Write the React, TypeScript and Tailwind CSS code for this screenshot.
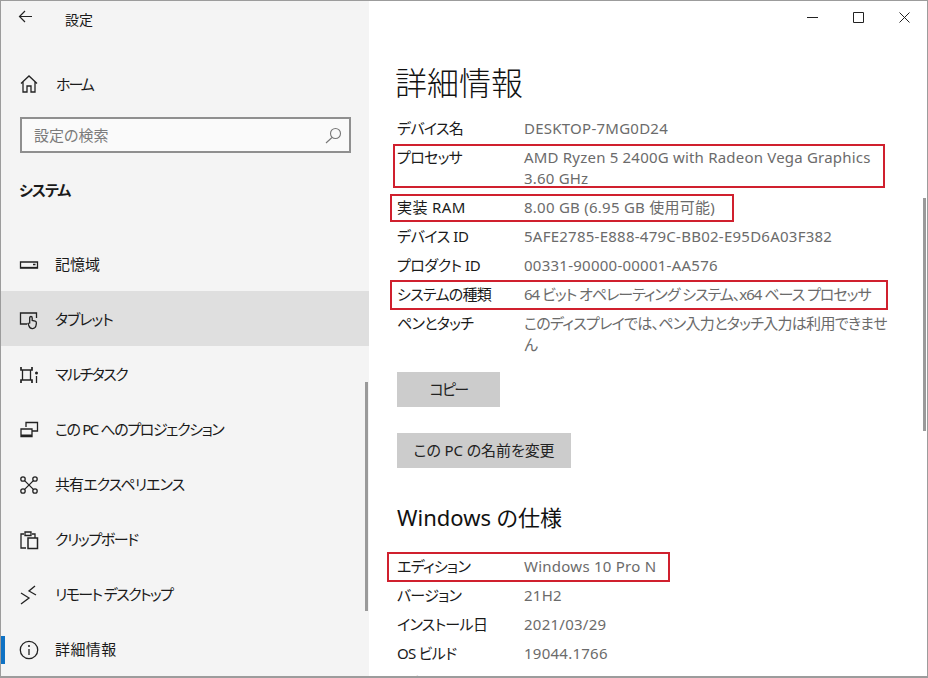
const F = "font-['Noto_Sans','Noto_Sans_CJK_JP',sans-serif] [font-feature-settings:'palt']";

const S = { width: 22, height: 22, viewBox: "0 0 22 22", fill: "none", stroke: "#222", strokeWidth: 1.3 } as const;

const icons: Record<string, React.ReactNode> = {
  home: <svg {...S}><path d="M3 10.5 11 3l8 7.5M5 9v10h4v-6h4v6h4V9" /></svg>,
  storage: <svg {...S}><path d="M2.5 8h17v6h-17zM15 10.5h2.5" /><path d="M2.5 13.5h17" /></svg>,
  tablet: (
    <svg {...S}>
      <path d="M9 15H2.5V4h16v5" />
      <path d="M13 7.5c1 0 1.2.7 1.2 1.5v2.5l3 .7c1 .3 1.3 1 1.2 2l-.4 2.3a3.6 3.6 0 0 1-7 .5l-1-2.5 1.7-.5V9c0-.8.3-1.5 1.3-1.5z" fill="#dfdfdf" />
    </svg>
  ),
  multi: (
    <svg {...S}>
      <path d="M3 3v3h11V3M3 19v-3h11v3" strokeWidth="1.7" />
      <path d="M4.5 6v10M12.5 6v10" />
      <circle cx="18.5" cy="9" r="1.5" fill="#222" stroke="none" />
      <path d="M18.5 12v7" />
    </svg>
  ),
  project: (
    <svg {...S}>
      <path d="M8 8V3.5h11.5V12H14" />
      <path d="M3 10h11v7.5H3z" />
      <path d="M3 16.5h11" strokeWidth="2" />
    </svg>
  ),
  share: (
    <svg {...S}>
      <circle cx="5" cy="5" r="2.2" />
      <circle cx="17" cy="5" r="2.2" />
      <circle cx="5" cy="17" r="2.2" />
      <circle cx="17" cy="17" r="2.2" />
      <path d="m6.6 6.6 8.8 8.8M15.4 6.6l-8.8 8.8" />
    </svg>
  ),
  clip: (
    <svg {...S}>
      <path d="M8 19H3V5h3M14 5h3v4" />
      <path d="M7 3h6v3.5H7z" />
      <path d="M10 9h9.5v10.5H10z" strokeWidth="1.5" />
    </svg>
  ),
  remote: (
    <svg {...S}>
      <path d="m3 9 8 5-8 6M17 2l-6 5 7 4" />
    </svg>
  ),
  info: (
    <svg {...S}>
      <circle cx="11" cy="11" r="8.7" />
      <path d="M11 10v6" />
      <circle cx="11" cy="7" r="1" fill="#222" stroke="none" />
    </svg>
  ),
};

const nav = [
  ["storage", "記憶域", "tracking-[0px]"],
  ["tablet", "タブレット", "tracking-[-1px]"],
  ["multi", "マルチタスク", "tracking-[-1.5px]"],
  ["project", "この PC へのプロジェクション", "tracking-[-1.4px]"],
  ["share", "共有エクスペリエンス", "tracking-[-0.9px]"],
  ["clip", "クリップボード", "tracking-[-1.4px]"],
  ["remote", "リモート デスクトップ", "tracking-[-1.6px]"],
  ["info", "詳細情報", "tracking-[0.4px]"],
];

function Row({ label, value, lt = "tracking-[-0.7px]", vt = "tracking-[0.25px]" }: { label: string; value: React.ReactNode; lt?: string; vt?: string }) {
  return (
    <div className="flex pb-2 text-[15px] leading-[21px]">
      <div className={`w-[127px] shrink-0 whitespace-nowrap text-[#1a1a1a] ${lt}`}>{label}</div>
      <div className={`w-[366px] text-[#6b6b6b] ${vt}`}>{value}</div>
    </div>
  );
}

function Mark({ c }: { c: string }) {
  return <div className={`absolute border-2 border-[#d0202e] ${c}`} />;
}

export default function App() {
  return (
    <div className={`relative flex h-[678px] w-[928px] overflow-hidden border border-b-2 border-[#9c9c9c] bg-white ${F}`}>
      <aside className="relative flex w-[368px] shrink-0 flex-col bg-[#f4f4f4] text-[#1a1a1a]">
        <div className="flex h-[39px] items-center pl-[17px] text-[14px]">
          <svg width="15" height="15" viewBox="0 0 15 15" fill="none" stroke="#222" strokeWidth="1.2" className="mb-[7px]">
            <path d="M14 7.5H1.5M7 2 1.5 7.5 7 13" />
          </svg>
          <span className="ml-[32px]">設定</span>
        </div>
        <div className="mt-[19px] flex h-[55px] items-center pl-[17px] text-[15px]">
          {icons.home}
          <span className="ml-[16px] tracking-[-2px]">ホーム</span>
        </div>
        <div className="ml-[19px] mt-[7px] flex h-[37px] w-[331px] items-center justify-between border-[2px] border-[#8f8f8f] bg-[#fafafa] pl-[12px] pr-[7px] text-[15px] text-[#7b7b7b]">
          <span>設定の検索</span>
          <svg width="17" height="17" viewBox="0 0 17 17" fill="none" stroke="#777" strokeWidth="1.1">
            <circle cx="10.5" cy="6.5" r="5" />
            <path d="M7 10.5 1 16" />
          </svg>
        </div>
        <div className="ml-[18px] mt-[26px] text-[15px] font-bold leading-[22px] tracking-[-1px]">システム</div>
        <nav className="mt-[35px] flex flex-col">
          {nav.map(([k, t, tr]) => (
            <div key={k} className={`relative flex h-[55px] items-center pl-[17px] pt-[2px] text-[15px] ${k === "tablet" ? "bg-[#dfdfdf]" : ""}`}>
              {k === "info" && <div className="absolute left-0 top-[15px] h-[28px] w-[4px] bg-[#0f72c4]" />}
              <span className="flex w-[22px] justify-center">{icons[k]}</span>
              <span className={`ml-[15px] whitespace-nowrap ${tr}`}>{t}</span>
            </div>
          ))}
        </nav>
        <div className="absolute left-[364px] top-[381px] h-[229px] w-[3px] bg-[#9a9a9a]" />
      </aside>

      <main className="relative flex-1 overflow-hidden pl-[28px]">
        <div className="absolute right-0 top-0 flex h-[32px] items-center text-[#222]">
          <span className="flex w-[46px] justify-center">
            <svg width="11" height="11" viewBox="0 0 11 11" stroke="#222"><path d="M0 5.5h11" /></svg>
          </span>
          <span className="flex w-[46px] justify-center">
            <svg width="11" height="11" viewBox="0 0 11 11" fill="none" stroke="#222"><path d="M.5.5h10v10H.5z" /></svg>
          </span>
          <span className="flex w-[46px] justify-center">
            <svg width="11" height="11" viewBox="0 0 11 11" fill="none" stroke="#222"><path d="m.5.5 10 10M10.5.5l-10 10" /></svg>
          </span>
        </div>
        <h1 className="ml-[-2px] mt-[60px] text-[32px] font-light leading-[44px] text-[#111]">詳細情報</h1>
        <div className="mt-[13px]">
          <Row label="デバイス名" value="DESKTOP-7MG0D24" />
          <Row label="プロセッサ" value="AMD Ryzen 5 2400G with Radeon Vega Graphics 3.60 GHz" vt="tracking-[0.2px]" />
          <Row label="実装 RAM" value="8.00 GB (6.95 GB 使用可能)" lt="tracking-[0.4px]" />
          <Row label="デバイス ID" value="5AFE2785-E888-479C-BB02-E95D6A03F382" lt="tracking-[-0.4px]" />
          <Row label="プロダクト ID" value="00331-90000-00001-AA576" lt="tracking-[-0.5px]" />
          <Row label="システムの種類" value="64 ビット オペレーティング システム、x64 ベース プロセッサ" vt="tracking-[-1px]" />
          <Row label="ペンとタッチ" value="このディスプレイでは、ペン入力とタッチ入力は利用できません" vt="tracking-[-0.7px]" />
        </div>
        <div className="mt-[9px] flex h-[35px] w-[103px] items-center justify-center bg-[#cccccc] text-[15px] tracking-[-1.6px] text-[#222]">コピー</div>
        <div className="mt-[26px] flex h-[35px] w-[174px] items-center justify-center bg-[#cccccc] text-[15px] tracking-[-0.1px] text-[#222]">この PC の名前を変更</div>
        <h2 className="mt-[32px] text-[22px] leading-[34px] text-[#111]">Windows の仕様</h2>
        <div className="mt-[22px]">
          <Row label="エディション" value="Windows 10 Pro N" />
          <Row label="バージョン" value="21H2" />
          <Row label="インストール日" value="2021/03/29" />
          <Row label="OS ビルド" value="19044.1766" />
          <Row label="エクスペリエンス" value="Windows Feature Experience Pack" />
        </div>
        <Mark c="left-[24px] top-[143px] h-[44px] w-[492px]" />
        <Mark c="left-[21px] top-[193px] h-[28px] w-[344px]" />
        <Mark c="left-[21px] top-[279px] h-[30px] w-[498px]" />
        <Mark c="left-[18px] top-[551px] h-[30px] w-[283px]" />
        <div className="absolute right-[1px] top-[197px] h-[233px] w-[3px] bg-[#9a9a9a]" />
      </main>
    </div>
  );
}
